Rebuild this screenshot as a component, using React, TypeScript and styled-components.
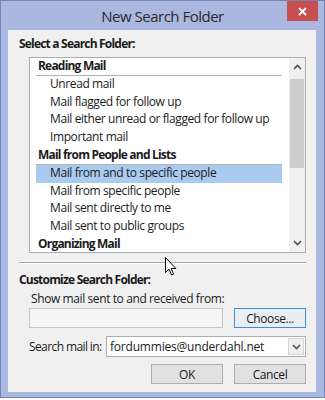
import React from 'react';
import styled, { createGlobalStyle } from 'styled-components';

const GlobalStyle = createGlobalStyle`
  html, body {
    margin: 0;
    padding: 0;
    background: #ffffff;
  }
  body {
    font-family: 'Open Sans', 'Noto Sans', sans-serif;
    font-size: 12px;
    letter-spacing: -0.4px;
    color: #1b1b1b;
  }
`;

// 창 틀
const Window = styled.div`
  width: 325px;
  height: 398px;
  box-sizing: border-box;
  border: 1px solid #7484b8;
  background: #aab8e0;
  padding: 0 8px 5px 7px;
  display: flex;
  flex-direction: column;
`;

const TitleBar = styled.div`
  height: 29px;
  margin: 0 -8px 0 -7px;
  display: grid;
  grid-template-columns: 1fr auto 1fr;
  align-items: start;
`;

const Title = styled.div`
  grid-column: 2;
  font-size: 15px;
  line-height: 30px;
  color: #2b2b2b;
  letter-spacing: -0.5px;
`;

const CloseButton = styled.div`
  grid-column: 3;
  justify-self: end;
  margin-right: 6px;
  width: 31px;
  height: 20px;
  background: #c74f4f;
  display: flex;
  align-items: center;
  justify-content: center;
`;

const Content = styled.div`
  position: relative;
  flex: 1;
  background: #f0f0f0;
  padding: 6px 10px 8px 11px;
  display: flex;
  flex-direction: column;
`;

const SectionLabel = styled.div`
  font-weight: 700;
  line-height: 16px;
  letter-spacing: -0.8px;
`;

const ListBox = styled.div`
  margin: 5px 0 0 10px;
  height: 196px;
  box-sizing: border-box;
  border: 1px solid #abadb3;
  background: #ffffff;
  display: flex;
  overflow: hidden;
`;

const Rows = styled.div`
  flex: 1;
  display: flex;
  flex-direction: column;
`;

const Row = styled.div<{ $header?: boolean; $selected?: boolean }>`
  height: 17.8px;
  flex: none;
  box-sizing: border-box;
  margin: 0 7px 0 6px;
  padding-left: ${p => (p.$header ? '2px' : '14px')};
  font-weight: ${p => (p.$header ? 700 : 400)};
  letter-spacing: ${p => (p.$header ? '-0.8px' : '-0.4px')};
  line-height: 16.8px;
  white-space: nowrap;
  background: ${p => (p.$selected ? '#aacbf0' : 'transparent')};
  border-bottom: ${p => (p.$header ? '1px solid #b4b4b4' : 'none')};
`;

const ScrollBar = styled.div`
  width: 16px;
  background: #f0f0f0;
  display: flex;
  flex-direction: column;
  align-items: center;
`;

const ScrollArrow = styled.div`
  height: 18px;
  width: 100%;
  display: flex;
  align-items: center;
  justify-content: center;
`;

const Thumb = styled.div`
  width: 14px;
  height: 89px;
  margin-top: 3px;
  background: #cdcdcd;
`;

const Spacer = styled.div`
  flex: 1;
`;

const Separator = styled.div`
  margin: 9px 0 0 0;
  height: 1px;
  background: #a9a9a9;
  border-bottom: 1px solid #ffffff;
`;

const CustomLabel = styled(SectionLabel)`
  margin-top: 8px;
`;

const SubLabel = styled.div`
  margin: 3px 0 0 12px;
  line-height: 16px;
`;

const FieldRow = styled.div<{ $top: number }>`
  margin: ${p => p.$top}px 0 0 10px;
  display: flex;
  align-items: center;
  justify-content: space-between;
  gap: 4px;
`;

const TextBox = styled.div`
  width: 194px;
  height: 20px;
  box-sizing: border-box;
  border: 1px solid #c8c8c8;
  background: #f5f5f5;
`;

const Button = styled.button<{ $focused?: boolean }>`
  width: 72px;
  height: 20px;
  flex: none;
  box-sizing: border-box;
  padding: 0;
  font-family: 'Open Sans', sans-serif;
  font-size: 12px;
  letter-spacing: -0.4px;
  color: #1b1b1b;
  border: 1px solid ${p => (p.$focused ? '#3c8fd8' : '#adadad')};
  background: ${p => (p.$focused ? '#e9eef4' : '#e1e1e1')};
`;

const InlineLabel = styled.div`
  white-space: nowrap;
  letter-spacing: -0.6px;
`;

const Combo = styled.div`
  width: 200px;
  flex: none;
  height: 21px;
  box-sizing: border-box;
  border: 1px solid #abadb3;
  background: #ffffff;
  display: flex;
  align-items: center;
  padding-left: 3px;
`;

const ComboText = styled.div`
  flex: 1;
  letter-spacing: -0.2px;
`;

const ComboButton = styled.div`
  width: 16px;
  height: 17px;
  margin-right: 1px;
  box-sizing: border-box;
  border: 1px solid #d5d5d5;
  background: #eeeeee;
  display: flex;
  align-items: center;
  justify-content: center;
`;

const ButtonRow = styled.div`
  margin-top: 7px;
  display: flex;
  justify-content: flex-end;
  gap: 11px;
`;

const Cursor = styled.svg`
  position: absolute;
  left: 157px;
  top: 227px;
`;

const Chevron = ({ up }: { up?: boolean }) => (
  <svg width='9' height='6' viewBox='0 0 9 6'>
    <path
      d={up ? 'M1 5 L4.5 1.5 L8 5' : 'M1 1 L4.5 4.5 L8 1'}
      fill='none'
      stroke='#505050'
      strokeWidth='1.6'
    />
  </svg>
);

const items: { text: string; header?: boolean; selected?: boolean }[] = [
  { text: 'Reading Mail', header: true },
  { text: 'Unread mail' },
  { text: 'Mail flagged for follow up' },
  { text: 'Mail either unread or flagged for follow up' },
  { text: 'Important mail' },
  { text: 'Mail from People and Lists', header: true },
  { text: 'Mail from and to specific people', selected: true },
  { text: 'Mail from specific people' },
  { text: 'Mail sent directly to me' },
  { text: 'Mail sent to public groups' },
  { text: 'Organizing Mail', header: true },
];

const App: React.FC = () => {
  return (
    <>
      <GlobalStyle />
      <Window>
        <TitleBar>
          <Title>New Search Folder</Title>
          <CloseButton>
            <svg width='9' height='9' viewBox='0 0 9 9'>
              <path d='M1 1 L8 8 M8 1 L1 8' stroke='#ffffff' strokeWidth='1.8' />
            </svg>
          </CloseButton>
        </TitleBar>
        <Content>
          <SectionLabel>Select a Search Folder:</SectionLabel>
          <ListBox>
            <Rows>
              {items.map(item => (
                <Row key={item.text} $header={item.header} $selected={item.selected}>
                  {item.text}
                </Row>
              ))}
            </Rows>
            <ScrollBar>
              <ScrollArrow>
                <Chevron up />
              </ScrollArrow>
              <Thumb />
              <Spacer />
              <ScrollArrow>
                <Chevron />
              </ScrollArrow>
            </ScrollBar>
          </ListBox>
          <Separator />
          <CustomLabel>Customize Search Folder:</CustomLabel>
          <SubLabel>Show mail sent to and received from:</SubLabel>
          <FieldRow $top={1}>
            <TextBox />
            <Button $focused>Choose...</Button>
          </FieldRow>
          <FieldRow $top={8}>
            <InlineLabel>Search mail in:</InlineLabel>
            <Combo>
              <ComboText>fordummies@underdahl.net</ComboText>
              <ComboButton>
                <Chevron />
              </ComboButton>
            </Combo>
          </FieldRow>
          <ButtonRow>
            <Button>OK</Button>
            <Button>Cancel</Button>
          </ButtonRow>
          <Cursor width='12' height='19' viewBox='0 0 12 19'>
            <path
              d='M0.5 0.5 L0.5 15.5 L4 12.2 L6.6 18 L8.6 17.1 L6.1 11.5 L10.8 11.5 Z'
              fill='#ffffff'
              stroke='#000000'
              strokeWidth='1'
              strokeLinejoin='round'
            />
          </Cursor>
        </Content>
      </Window>
    </>
  );
};

export default App;
